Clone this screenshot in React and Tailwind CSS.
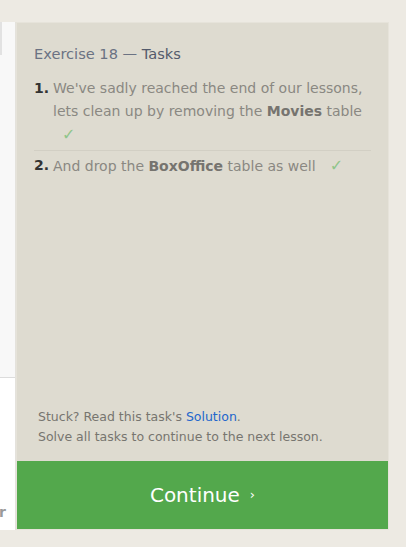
export default function App() {
    return (
        <div className="w-[406px] h-[547px] bg-[#edeae3] pt-[22px] flex font-['DejaVu_Sans',sans-serif] overflow-hidden">
            {/* left editor edge */}
            <div className="w-[16px] h-[508px] flex flex-col border-r border-[#e4e2dc]">
                <div className="h-[356px] bg-[#f8f8f8] border-b border-[#dcdcdc]">
                    <div className="h-[33px] border-l-2 border-[#e2e2e2]" />
                </div>
                <div className="flex-1 bg-white relative overflow-hidden">
                    <span className="absolute left-[-1px] bottom-[10px] text-[14px] leading-[16px] text-[#9a9a9a] font-bold">r</span>
                </div>
            </div>

            <div className="w-[373px] h-[508px] bg-[#dedbd0] flex flex-col border border-[#e6e3da]">
                <div className="flex-1 px-[17px] pt-[20px]">
                    <h2 className="text-[14.6px] text-[#6b7283]">
                        Exercise 18 — <span className="text-[#535a6b]">Tasks</span>
                    </h2>
                    <ol className="mt-[12px] text-[14px] leading-[23px] text-[#8a8882]">
                        <li className="flex pb-[3px] border-b border-[#d2cfc4]">
                            <span className="w-[19px] shrink-0 text-[#333] font-bold">1.</span>
                            <span>
                                We've sadly reached the end of our lessons, lets clean up by removing the{' '}
                                <b className="text-[#76746f]">Movies</b> table
                                <br />
                                <span className="ml-[9px] text-[16px] text-[#8fc58a]">✓</span>
                            </span>
                        </li>
                        <li className="flex pt-[3px]">
                            <span className="w-[19px] shrink-0 text-[#333] font-bold">2.</span>
                            <span>
                                And drop the <b className="text-[#76746f]">BoxOffice</b> table as well
                                <span className="ml-[14px] text-[16px] text-[#8fc58a]">✓</span>
                            </span>
                        </li>
                    </ol>
                </div>
                <div className="px-[21px] pb-[14px] text-[12.5px] leading-[20px] text-[#77756f]">
                    <p>
                        Stuck? Read this task's <a className="text-[#2266cc]">Solution</a>.
                    </p>
                    <p>Solve all tasks to continue to the next lesson.</p>
                </div>
                <button className="h-[68px] bg-[#53a84c] text-white text-[20px] flex items-center justify-center gap-[10px]">
                    Continue <span className="text-[13px]">›</span>
                </button>
            </div>
        </div>
    );
}
